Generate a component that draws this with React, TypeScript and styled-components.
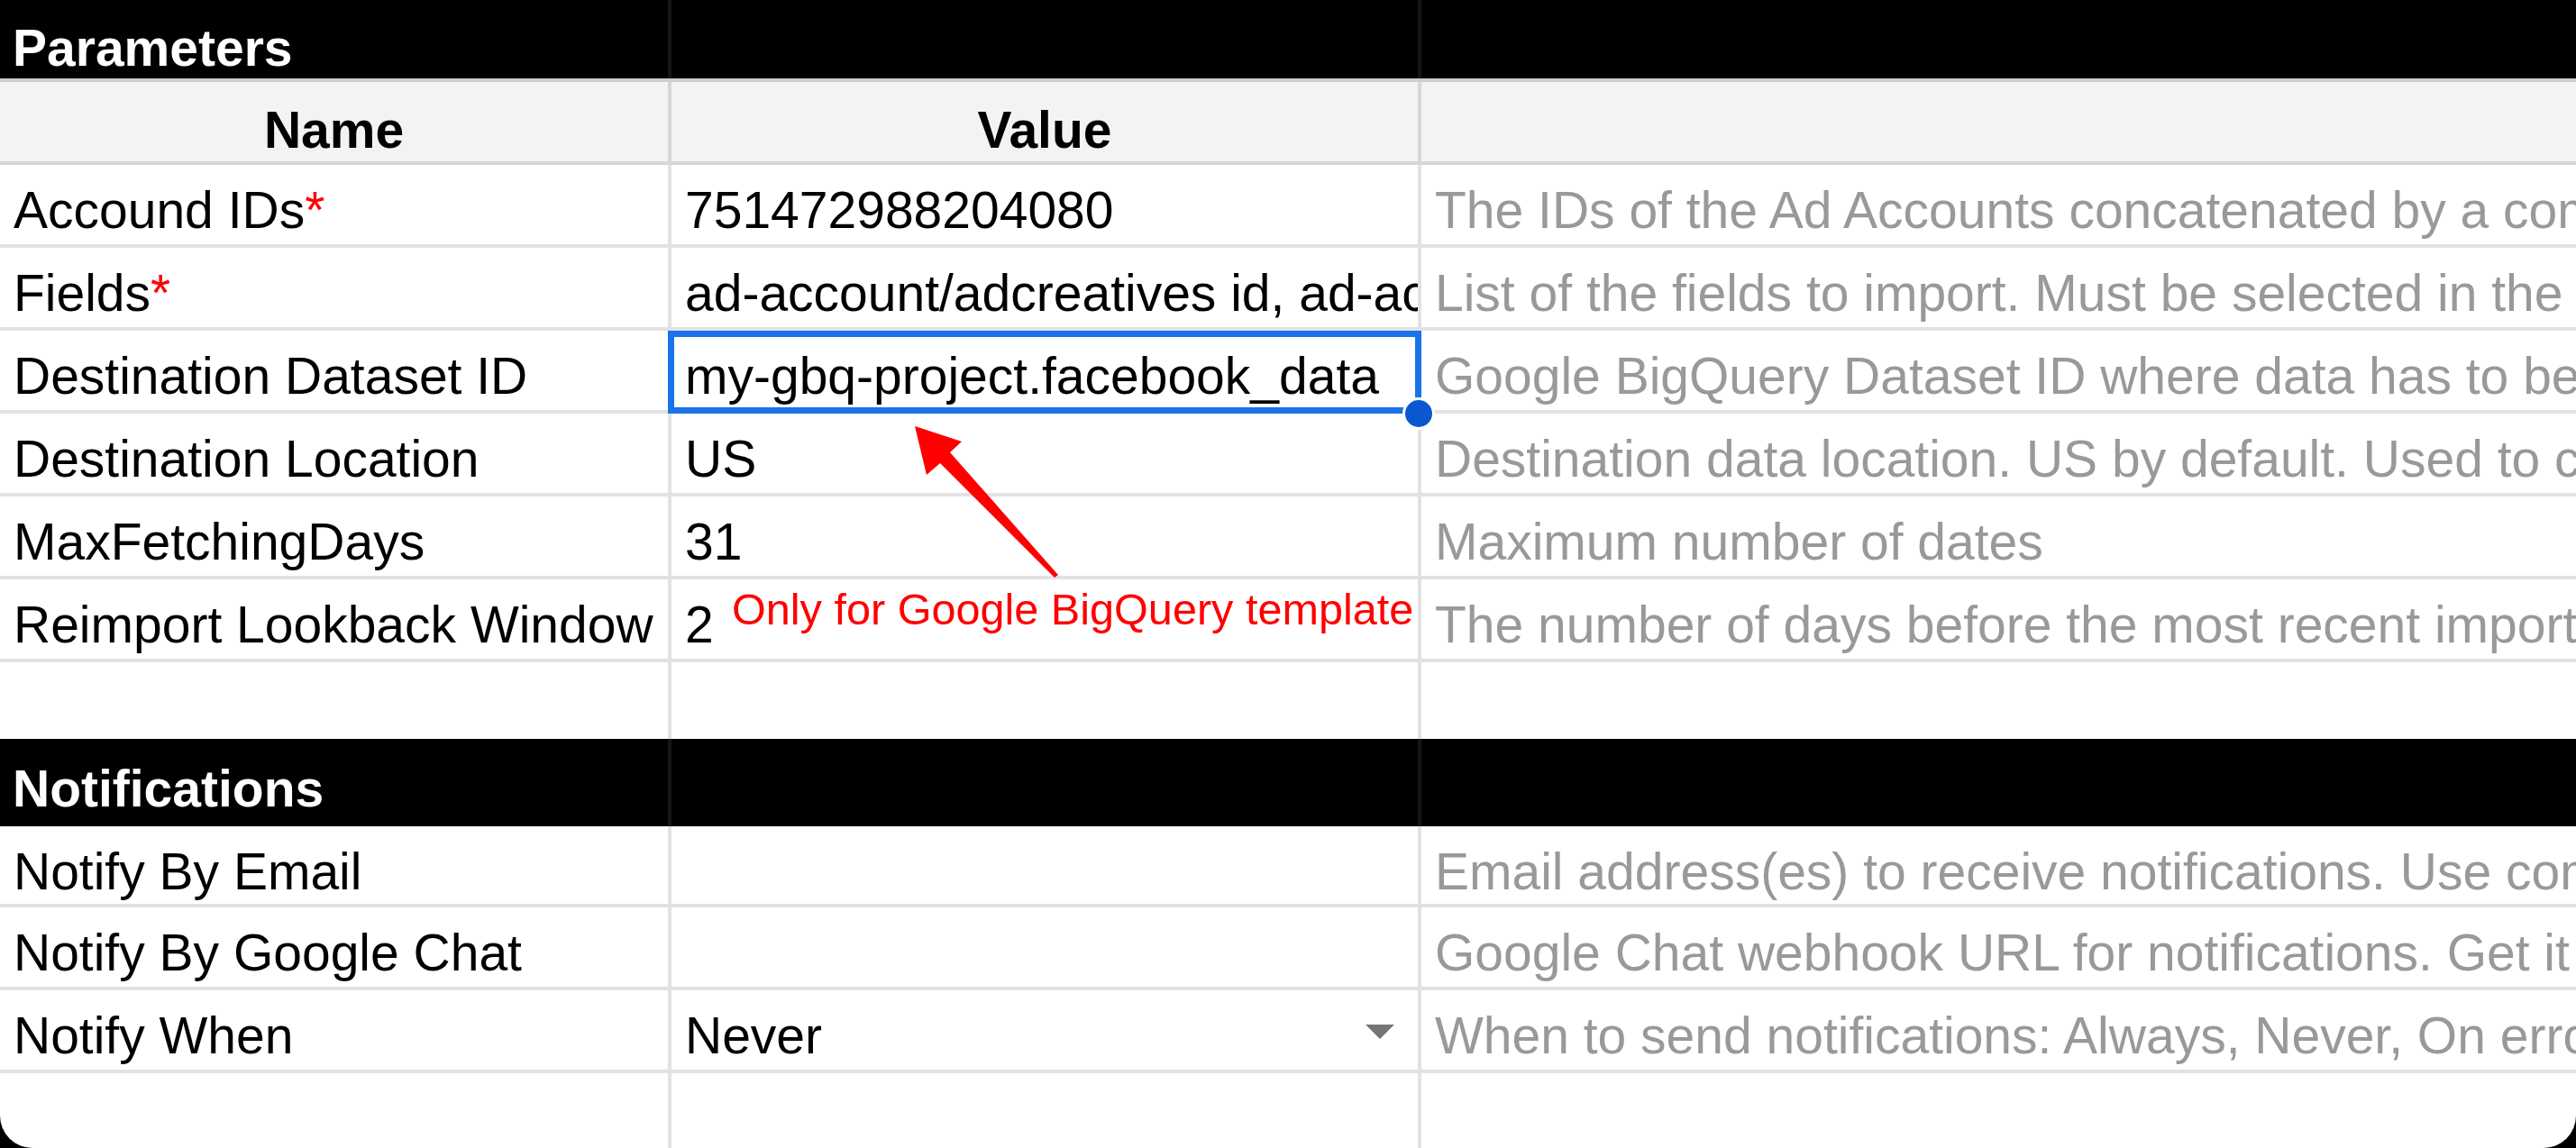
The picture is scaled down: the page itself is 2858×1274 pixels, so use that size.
import React from 'react';
import styled, { createGlobalStyle } from 'styled-components';

const GlobalStyle = createGlobalStyle`
  html, body {
    margin: 0;
    padding: 0;
    background: #000;
    overflow: hidden;
  }
  #root {
    width: 2858px;
    height: 1274px;
  }
`;

const COLS = '745px 832px minmax(0, 1fr)';

const Sheet = styled.div`
  position: relative;
  width: 2858px;
  height: 1274px;
  background: #fff;
  border-radius: 0 0 36px 36px;
  overflow: hidden;
  display: flex;
  flex-direction: column;
  font-family: "Liberation Sans", Arial, sans-serif;
  font-size: 57px;
  color: #000;
`;

const Band = styled.div<{ $h: number }>`
  flex: none;
  display: grid;
  grid-template-columns: ${COLS};
  height: ${p => p.$h}px;
  background: #000;
`;

const BandCell = styled.div<{ $pt: number }>`
  box-sizing: border-box;
  padding: ${p => p.$pt}px 14px 0;
  border-right: 4px solid #161616;
  color: #fff;
  font-weight: 700;
  line-height: 64px;
  white-space: nowrap;
  &:last-child {
    border-right: none;
  }
`;

const HeaderRow = styled.div`
  flex: none;
  display: grid;
  grid-template-columns: ${COLS};
  box-sizing: border-box;
  height: 96px;
  border-top: 4px solid #cdcdcd;
  border-bottom: 4px solid #d6d6d6;
  background: #f3f3f3;
`;

const HeaderCell = styled.div`
  box-sizing: border-box;
  padding-top: 21px;
  border-right: 4px solid #d6d6d6;
  line-height: 64px;
  font-weight: 700;
  text-align: center;
  &:last-child {
    border-right: none;
  }
`;

const Row = styled.div<{ $h?: number; $flat?: boolean; $grow?: boolean }>`
  flex: ${p => (p.$grow ? '1 1 auto' : 'none')};
  display: grid;
  grid-template-columns: ${COLS};
  box-sizing: border-box;
  height: ${p => (p.$grow ? 'auto' : `${p.$h ?? 92}px`)};
  border-bottom: ${p => (p.$flat || p.$grow ? 'none' : '4px solid #e2e2e2')};
`;

const Cell = styled.div<{ $muted?: boolean; $clip?: boolean }>`
  position: relative;
  display: flex;
  box-sizing: border-box;
  min-width: 0;
  padding: 18px 15px 0;
  border-right: 4px solid #e2e2e2;
  line-height: 64px;
  white-space: nowrap;
  color: ${p => (p.$muted ? '#999999' : '#000')};
  overflow: ${p => (p.$clip ? 'hidden' : 'visible')};
  &:last-child {
    border-right: none;
  }
`;

const Required = styled.span`
  color: #ff0000;
`;

const Selection = styled.div`
  position: absolute;
  top: 0;
  left: -4px;
  right: -4px;
  bottom: -4px;
  border: 7px solid #1a73e8;
  z-index: 2;
  pointer-events: none;
`;

const FillHandle = styled.div`
  position: absolute;
  right: -19px;
  bottom: -22px;
  box-sizing: border-box;
  width: 36px;
  height: 36px;
  border: 3px solid #fff;
  border-radius: 50%;
  background: #0b57d0;
  z-index: 3;
`;

const Caret = styled.span`
  align-self: flex-start;
  margin: 20px 11px 0 auto;
  width: 0;
  height: 0;
  border-left: 16px solid transparent;
  border-right: 16px solid transparent;
  border-top: 16px solid #757575;
`;

const Annotation = styled.span`
  position: absolute;
  left: 67px;
  top: 6px;
  font-size: 48.6px;
  line-height: 54px;
  color: #ff0000;
  white-space: nowrap;
  z-index: 2;
`;

const Overlay = styled.svg`
  position: absolute;
  top: 0;
  left: 0;
  pointer-events: none;
  z-index: 4;
`;

type Param = {
  name: string;
  required?: boolean;
  value: string;
  desc: string;
  clip?: boolean;
  selected?: boolean;
  note?: string;
};

const params: Param[] = [
  {
    name: 'Accound IDs',
    required: true,
    value: '751472988204080',
    desc: 'The IDs of the Ad Accounts concatenated by a comma',
  },
  {
    name: 'Fields',
    required: true,
    value: 'ad-account/adcreatives id, ad-account/adcreatives name, ad-account/adcreatives status',
    clip: true,
    desc: 'List of the fields to import. Must be selected in the Fields sidebar',
  },
  {
    name: 'Destination Dataset ID',
    value: 'my-gbq-project.facebook_data',
    selected: true,
    desc: 'Google BigQuery Dataset ID where data has to be imported',
  },
  {
    name: 'Destination Location',
    value: 'US',
    desc: 'Destination data location. US by default. Used to create the dataset',
  },
  {
    name: 'MaxFetchingDays',
    value: '31',
    desc: 'Maximum number of dates',
  },
  {
    name: 'Reimport Lookback Window',
    value: '2',
    note: 'Only for Google BigQuery template',
    desc: 'The number of days before the most recent import date to re-import',
  },
];

type Notice = { name: string; value: string; desc: string; dropdown?: boolean; h: number };

const notices: Notice[] = [
  {
    name: 'Notify By Email',
    value: '',
    desc: 'Email address(es) to receive notifications. Use comma to separate',
    h: 90,
  },
  {
    name: 'Notify By Google Chat',
    value: '',
    desc: 'Google Chat webhook URL for notifications. Get it from the space settings',
    h: 92,
  },
  {
    name: 'Notify When',
    value: 'Never',
    dropdown: true,
    desc: 'When to send notifications: Always, Never, On error',
    h: 92,
  },
];

export default function App() {
  return (
    <>
      <GlobalStyle />
      <Sheet>
        <Band $h={87}>
          <BandCell $pt={21}>Parameters</BandCell>
          <BandCell $pt={21} />
          <BandCell $pt={21} />
        </Band>

        <HeaderRow>
          <HeaderCell>Name</HeaderCell>
          <HeaderCell>Value</HeaderCell>
          <HeaderCell />
        </HeaderRow>

        {params.map(p => (
          <Row key={p.name}>
            <Cell>
              {p.name}
              {p.required && <Required>*</Required>}
            </Cell>
            <Cell $clip={p.clip}>
              {p.value}
              {p.selected && (
                <>
                  <Selection />
                  <FillHandle />
                </>
              )}
              {p.note && <Annotation>{p.note}</Annotation>}
            </Cell>
            <Cell $muted>{p.desc}</Cell>
          </Row>
        ))}

        <Row $h={85} $flat>
          <Cell />
          <Cell />
          <Cell />
        </Row>

        <Band $h={97}>
          <BandCell $pt={23}>Notifications</BandCell>
          <BandCell $pt={23} />
          <BandCell $pt={23} />
        </Band>

        {notices.map(n => (
          <Row key={n.name} $h={n.h}>
            <Cell>{n.name}</Cell>
            <Cell>
              {n.value}
              {n.dropdown && <Caret />}
            </Cell>
            <Cell $muted>{n.desc}</Cell>
          </Row>
        ))}

        <Row $grow>
          <Cell />
          <Cell />
          <Cell />
        </Row>

        <Overlay width={2858} height={1274} viewBox="0 0 2858 1274">
          <polygon
            points="1015,473 1067,490 1054,502 1174,638 1170,641 1043,514 1028,527"
            fill="#ff0000"
          />
        </Overlay>
      </Sheet>
    </>
  );
}
